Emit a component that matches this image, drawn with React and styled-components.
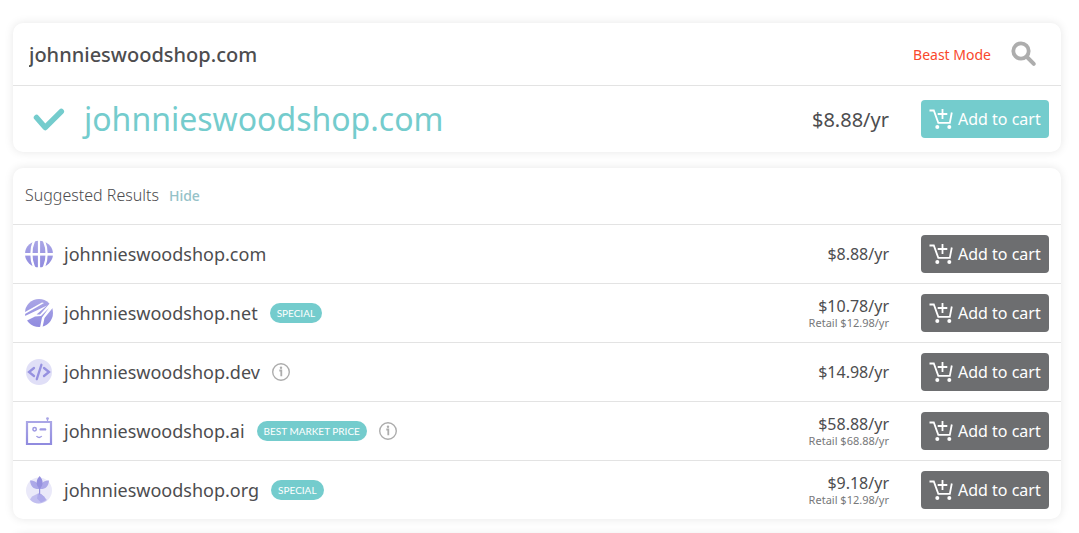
import React, { useState } from "react";
import styled, { createGlobalStyle } from "styled-components";

const domains = [
  { name: "johnnieswoodshop.com", icon: "globe", price: "$8.88/yr" },
  {
    name: "johnnieswoodshop.net",
    icon: "net",
    badge: "SPECIAL",
    price: "$10.78/yr",
    retail: "Retail $12.98/yr",
  },
  { name: "johnnieswoodshop.dev", icon: "code", info: true, price: "$14.98/yr" },
  {
    name: "johnnieswoodshop.ai",
    icon: "robot",
    badge: "BEST MARKET PRICE",
    info: true,
    price: "$58.88/yr",
    retail: "Retail $68.88/yr",
  },
  {
    name: "johnnieswoodshop.org",
    icon: "plant",
    badge: "SPECIAL",
    price: "$9.18/yr",
    retail: "Retail $12.98/yr",
  },
];

const GlobeIcon = () => (
  <svg width="28" height="28" viewBox="0 0 28 28">
    <ellipse cx="14" cy="14" rx="14" ry="13.3" fill="url(#violet)" />
    <g fill="none" stroke="#fff">
      <path d="M0 14.3h28" strokeWidth="2.6" />
      <path d="M14 0v28" strokeWidth="2.2" />
      <ellipse cx="14" cy="14" rx="7.6" ry="17" strokeWidth="2.2" />
    </g>
  </svg>
);

const NetIcon = () => (
  <svg width="28" height="28" viewBox="0 0 28 28">
    <circle cx="14" cy="14" r="14" fill="url(#violet)" />
    <g fill="#fff">
      <path d="M0 13 17 3.5 19 4 0 15z" />
      <path d="M-1 17.5 22 6.5 11.5 15.500h3.500L25.500 3.500 28.500 8 19.500 19 17.500 28.500h-2.500L17 18.500 24 9 16 17l-6 .5-11 5.500z" />
    </g>
  </svg>
);

const CodeIcon = () => (
  <svg width="28" height="28" viewBox="0 0 28 28">
    <circle cx="14" cy="14" r="13" fill="#e0dff7" />
    <path
      d="M9 10 4 14 9 18M19 10l5 4-5 4M16.400 6.800l-4.600 14.400"
      fill="none"
      stroke="#9691e0"
      strokeWidth="2.300"
      strokeLinecap="round"
    />
  </svg>
);

const RobotIcon = () => (
  <svg width="28" height="28" viewBox="0 0 28 28">
    <path d="M2 5h24v22H2z" fill="none" stroke="url(#violet)" strokeWidth="2.2" />
    <path d="M22.5 5V2" stroke="#a9a5e6" strokeWidth="1.2" />
    <circle cx="22.5" cy="1.6" r="1.4" fill="#a9a5e6" />
    <circle cx="9.6" cy="12.3" r="1.7" fill="none" stroke="#9d98e2" strokeWidth="1.5" />
    <path d="M15.7 12.4h4.4" stroke="#9d98e2" strokeWidth="2.4" strokeLinecap="round" />
    <path d="M11.5 19c1.2 1.9 4 1.9 5.2 0" fill="none" stroke="#9d98e2" strokeWidth="1.4" />
  </svg>
);

const PlantIcon = () => (
  <svg width="28" height="28" viewBox="0 0 28 28">
    <circle cx="14" cy="14.5" r="13" fill="#eae9f9" />
    <path d="M5 23.500 7 20.500l3-1.500 3-1.500 3 .5 3 2.500 3 3.500c-5 4.600-12.500 4.600-17-.5z" fill="#c1beef" />
    <path d="m13 17.500 3 .5 3 2.500 2 3.500-5 2.500-4-4z" fill="#aeaaea" />
    <path d="M5 4.500c5 0 9 2.500 9.700 8.500C9 13.500 5.500 11 5 4.500zM24 4.500c-5 0-8.700 2.500-9.300 8.500 5.300.5 9-2 9.300-8.500z" fill="#aca8e8" />
    <path d="M14.600 0c4 4.500 4 8.800 0 13.300-4-4.500-4-8.800 0-13.300z" fill="#9691df" />
    <path d="M14.600 12v6.500" stroke="#9792df" strokeWidth="1.200" />
  </svg>
);

const icons = {
  globe: GlobeIcon,
  net: NetIcon,
  code: CodeIcon,
  robot: RobotIcon,
  plant: PlantIcon,
};

const CheckIcon = () => (
  <svg width="32" height="24" viewBox="0 0 32 24">
    <path
      d="M3.500 10.500 12.200 20.500 28.300 4.500"
      fill="none"
      stroke="#74cccd"
      strokeWidth="5.500"
      strokeLinecap="round"
      strokeLinejoin="round"
    />
  </svg>
);

const SearchIcon = () => (
  <svg width="26" height="26" viewBox="0 0 26 26">
    <circle cx="10" cy="10" r="7.700" fill="none" stroke="#adadad" strokeWidth="3.800" />
    <path d="m16 16 6.800 6.800" stroke="#adadad" strokeWidth="4" strokeLinecap="round" />
  </svg>
);

const CartIcon = () => (
  <svg width="24" height="22" viewBox="0 0 24 22">
    <g fill="none" stroke="#fff" strokeWidth="1.800">
      <path d="M.5 2.500h4.300l4.500 12.300h11.500l2-10.300" />
      <path d="M13.500 1v10M8.700 6h9.600" />
    </g>
    <circle cx="8.300" cy="19" r="2" fill="#fff" />
    <circle cx="20.300" cy="19" r="2" fill="#fff" />
  </svg>
);

const InfoIcon = () => (
  <svg width="18" height="18" viewBox="0 0 18 18">
    <circle cx="9" cy="9" r="8.300" fill="none" stroke="#adadad" strokeWidth="1.400" />
    <path d="M7.300 7.500h2v5.700" fill="none" stroke="#adadad" strokeWidth="1.800" />
    <circle cx="9" cy="4.800" r="1.200" fill="#adadad" />
  </svg>
);

const App = () => {
  const [query, setQuery] = useState("johnnieswoodshop.com");
  const [open, setOpen] = useState(true);

  return (
    <Page>
      <GlobalStyle />
      <Gradient aria-hidden="true">
        <linearGradient id="violet" x1="0" y1="0" x2="0" y2="1">
          <stop offset="0" stopColor="#aaa6e6" />
          <stop offset="1" stopColor="#908bdf" />
        </linearGradient>
      </Gradient>

      <Card>
        <SearchBar>
          <SearchInput
            aria-label="Domain"
            value={query}
            onChange={(e) => setQuery(e.target.value)}
          />
          <BeastLink href="#beast">Beast Mode</BeastLink>
          <IconButton type="button" aria-label="Search">
            <SearchIcon />
          </IconButton>
        </SearchBar>
        <TopResult>
          <CheckIcon />
          <TopName>johnnieswoodshop.com</TopName>
          <TopPrice>$8.88/yr</TopPrice>
          <CartButton type="button" $primary>
            <CartIcon />
            Add to cart
          </CartButton>
        </TopResult>
      </Card>

      <Card>
        <SectionHead>
          <SectionTitle>Suggested Results</SectionTitle>
          <HideButton type="button" onClick={() => setOpen(!open)}>
            {open ? "Hide" : "Show"}
          </HideButton>
        </SectionHead>
        {open && (
          <List>
            {domains.map((d) => {
              const Icon = icons[d.icon];
              return (
                <Row key={d.name}>
                  <Icon />
                  <Name>
                    <span>{d.name}</span>
                    {d.badge && <Badge>{d.badge}</Badge>}
                    {d.info && (
                      <IconButton type="button" aria-label="More info">
                        <InfoIcon />
                      </IconButton>
                    )}
                  </Name>
                  <Prices>
                    <Price>{d.price}</Price>
                    {d.retail && <Retail>{d.retail}</Retail>}
                  </Prices>
                  <CartButton type="button">
                    <CartIcon />
                    Add to cart
                  </CartButton>
                </Row>
              );
            })}
          </List>
        )}
      </Card>

      <Card>
        <SectionHead />
      </Card>
    </Page>
  );
};

export default App;

const GlobalStyle = createGlobalStyle`
  * {
    box-sizing: border-box;
  }
  body {
    margin: 0;
    background: #fff;
    color: #4d4d4f;
    font-family: "Noto Sans", "Open Sans", sans-serif;
  }
  button, input {
    font-family: inherit;
  }
`;
const Page = styled.main`
  display: flex;
  flex-direction: column;
  gap: 16px;
  height: 100vh;
  padding: 23px 18px 0 13px;
  overflow: hidden;
`;
const Gradient = styled.svg`
  position: absolute;
  width: 0;
  height: 0;
`;
const Card = styled.section`
  flex-shrink: 0;
  background: #fff;
  border-radius: 10px;
  box-shadow: 0 0 10px rgba(0, 0, 0, 0.1);
`;
const SearchBar = styled.div`
  display: flex;
  align-items: center;
  height: 63px;
  padding: 0 24px 0 16px;
  border-bottom: 1px solid #e3e3e3;
`;
const SearchInput = styled.input`
  flex: 1;
  min-width: 0;
  padding: 0;
  border: 0;
  outline: 0;
  background: transparent;
  color: #4d4d4f;
  font-size: 20px;
  font-weight: 500;
`;
const BeastLink = styled.a`
  margin-right: 20px;
  color: #f9482c;
  font-size: 14px;
  text-decoration: none;
`;
const IconButton = styled.button`
  display: flex;
  padding: 0;
  border: 0;
  background: none;
  cursor: pointer;
`;
const TopResult = styled.div`
  display: flex;
  align-items: center;
  height: 66px;
  padding: 0 12px 0 20px;
`;
const TopName = styled.h1`
  flex: 1;
  margin: 0;
  padding-left: 19px;
  color: #74cccd;
  font-size: 32px;
  font-weight: 400;
  line-height: 40px;
`;
const TopPrice = styled.span`
  margin-right: 32px;
  font-size: 20px;
`;
const CartButton = styled.button`
  display: flex;
  align-items: center;
  gap: 5px;
  width: 128px;
  height: 38px;
  padding: 0 8px;
  border: 0;
  border-radius: 4px;
  background: ${(props) => (props.$primary ? "#74cccd" : "#6d6e70")};
  color: #fff;
  font-size: 16px;
  white-space: nowrap;
  cursor: pointer;
`;
const SectionHead = styled.header`
  display: flex;
  align-items: baseline;
  gap: 10px;
  min-height: 56px;
  padding: 16px 12px 0;
`;
const SectionTitle = styled.h2`
  margin: 0;
  font-size: 16px;
  font-weight: 300;
`;
const HideButton = styled.button`
  padding: 0;
  border: 0;
  background: none;
  color: #95c2c8;
  font-size: 14px;
  font-weight: 500;
  cursor: pointer;
`;
const List = styled.ul`
  margin: 0;
  padding: 0;
  list-style: none;
`;
const Row = styled.li`
  display: flex;
  align-items: center;
  height: 59px;
  padding: 0 12px;
  border-top: 1px solid #e3e3e3;
`;
const Name = styled.div`
  display: flex;
  flex: 1;
  align-items: center;
  gap: 12px;
  padding-left: 11px;
  font-size: 18px;
`;
const Badge = styled.span`
  height: 20px;
  padding: 0 7px;
  border-radius: 10px;
  background: #74cccd;
  color: #fff;
  font-family: Lato, sans-serif;
  font-size: 10px;
  line-height: 20px;
`;
const Prices = styled.div`
  display: flex;
  flex-direction: column;
  align-items: flex-end;
  margin-right: 32px;
`;
const Price = styled.span`
  font-size: 16px;
  line-height: 20px;
`;
const Retail = styled.span`
  color: #77787a;
  font-size: 11px;
  line-height: 14px;
`;
